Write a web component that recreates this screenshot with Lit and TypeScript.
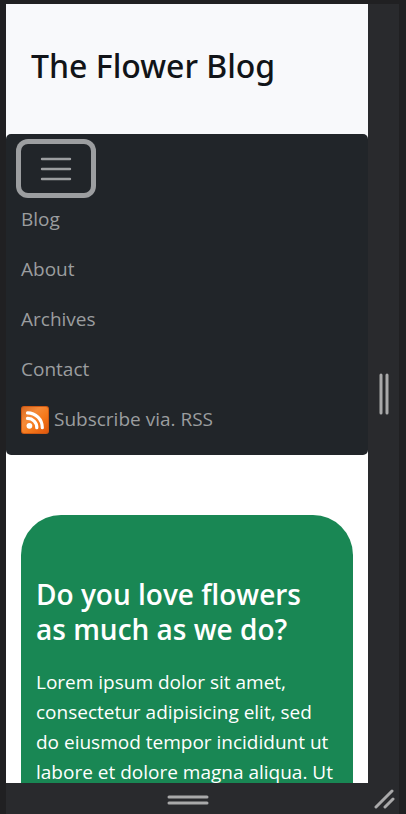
import { LitElement, html, css, svg } from "lit";
import { customElement, state } from "lit/decorators.js";

const rssIcon = svg`
  <svg class="rss" viewBox="0 0 28 28" aria-hidden="true">
    <defs>
      <linearGradient id="rss-fill" x1="0" y1="0" x2="1" y2="1">
        <stop offset="0" stop-color="#d96a22" />
        <stop offset="0.35" stop-color="#f58a38" />
        <stop offset="0.6" stop-color="#f57a1c" />
        <stop offset="1" stop-color="#e0560c" />
      </linearGradient>
    </defs>
    <rect width="28" height="28" rx="3" fill="#cf5a14" />
    <rect x="1" y="1" width="26" height="26" rx="2" fill="url(#rss-fill)" />
    <circle cx="8.4" cy="19.8" r="2.9" fill="#fff" />
    <path d="M6.5 12.4a9 9 0 0 1 9.3 9.3M6.5 6.9a14.8 14.8 0 0 1 14.8 14.8" fill="none" stroke="#fff" stroke-width="3.2" stroke-linecap="round" />
  </svg>`;

@customElement("app-root")
export class AppRoot extends LitElement {
  static styles = css`
    :host {
      display: block;
      font-family: "Open Sans", "Noto Sans", sans-serif;
      font-size: 19px;
      line-height: 30px;
      color: #111418;
    }
    * {
      box-sizing: border-box;
    }
    .frame {
      height: 100vh;
      display: grid;
      grid-template-columns: minmax(0, 1fr) 31px;
      grid-template-rows: minmax(0, 1fr) 31px;
      padding: 4px 7px 0 6px;
      background: #202022;
    }
    .screen {
      overflow: hidden;
      background: #fff;
    }
    .grip {
      display: flex;
      align-items: center;
      justify-content: center;
      padding: 2px 0 0 2px;
      border: 0;
      border-radius: 0;
      background: #292a2d;
      color: #a9a9aa;
    }
    .grip svg {
      display: block;
      fill: none;
      stroke: currentColor;
      stroke-width: 3;
      stroke-linecap: round;
    }
    .side {
      padding: 0;
    }
    .masthead {
      padding: 40px 25px 46px;
      background: #f8f9fb;
    }
    .underlay {
      background: linear-gradient(#f8f9fb 50%, #fff 50%);
    }
    h1 {
      margin: 0;
      font-family: "Noto Sans", "Open Sans", sans-serif;
      font-size: 32px;
      line-height: 44px;
      font-weight: 500;
    }
    nav {
      padding: 10px 15px 11px;
      border-radius: 5px;
      background: #212529;
    }
    .toggler {
      display: flex;
      align-items: center;
      justify-content: center;
      width: 70px;
      height: 49px;
      margin: 0 0 1px;
      padding: 0;
      border: 0;
      border-radius: 7px;
      background: none;
      box-shadow: 0 0 0 5px #9c9ea0;
      color: #9c9ea0;
    }
    .toggler svg {
      display: block;
    }
    ul {
      margin: 0;
      padding: 0;
      list-style: none;
    }
    .link {
      display: flex;
      align-items: flex-end;
      gap: 5px;
      padding: 10px 0;
      color: #9b9d9f;
      text-decoration: none;
    }
    .rss {
      width: 28px;
      height: 28px;
    }
    main {
      padding: 60px 15px;
    }
    .card {
      padding: 62px 15px;
      border-radius: 40px;
      background: #198754;
      color: #fff;
    }
    h2 {
      margin: 0 0 20px;
      font-size: 28px;
      line-height: 35px;
      font-weight: 600;
    }
    p {
      margin: 0;
    }
  `;

  @state() private open = true;

  private links = ["Blog", "About", "Archives", "Contact"];

  render() {
    return html`
      <div class="frame">
        <div class="screen">
          <header class="masthead"><h1>The Flower Blog</h1></header>
          <div class="underlay">
            <nav>
              <button
                class="toggler"
                aria-label="Toggle navigation"
                aria-expanded=${this.open}
                @click=${() => (this.open = !this.open)}
              >
                <svg width="32" height="24" viewBox="0 0 32 24" fill="none" stroke="currentColor" stroke-width="2.4" stroke-linecap="round">
                  <path d="M2 2h28M2 12h28M2 22h28" />
                </svg>
              </button>
              <ul ?hidden=${!this.open}>
                ${this.links.map((name) => html`<li><a class="link" href="#">${name}</a></li>`)}
                <li><a class="link" href="#">${rssIcon}<span>Subscribe via. RSS</span></a></li>
              </ul>
            </nav>
          </div>
          <main>
            <section class="card">
              <h2>Do you love flowers as much as we do?</h2>
              <p>
                Lorem ipsum dolor sit amet, consectetur adipisicing elit, sed do eiusmod tempor
                incididunt ut labore et dolore magna aliqua. Ut
              </p>
            </section>
          </main>
        </div>
        <button class="grip side" aria-label="Resize width">
          <svg width="12" height="42" viewBox="0 0 12 42"><path d="M3 2v38M9 2v38" /></svg>
        </button>
        <button class="grip" aria-label="Resize height">
          <svg width="42" height="12" viewBox="0 0 42 12"><path d="M2 3h38M2 9h38" /></svg>
        </button>
        <button class="grip side" aria-label="Resize both">
          <svg width="22" height="22" viewBox="0 0 22 22"><path d="M3 19L19 3M12 19L20 11" /></svg>
        </button>
      </div>
    `;
  }
}
